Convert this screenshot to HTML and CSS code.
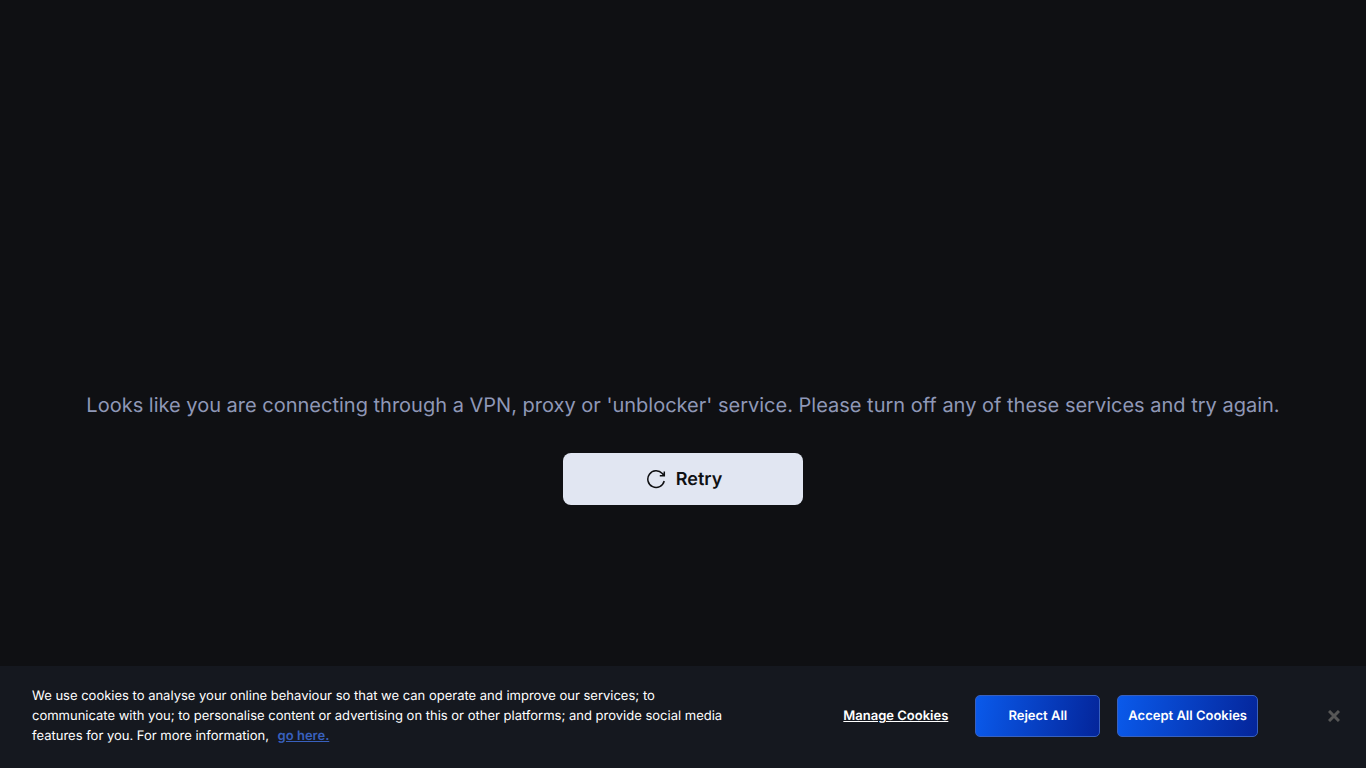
FILE: index.html
```html
<!DOCTYPE html>
<html lang="en">
<head>
<meta charset="utf-8">
<meta name="viewport" content="width=device-width, initial-scale=1">
<title>Connection unavailable</title>
<link rel="stylesheet" href="styles.css">
</head>
<body>
<main class="notice">
  <p class="notice-text">Looks like you are connecting through a VPN, proxy or 'unblocker' service. Please turn off any of these services and try again.</p>
  <button class="retry" type="button">
    <svg class="retry-icon" viewBox="0 0 20 20" aria-hidden="true"><path d="M18.200 12A8.300 8.300 0 1 1 16.300 4.600L17.200 5.600"/><path d="M18.300 2.500v4.300h-4.500"/><path d="M18.300 3.800v3h-3z" fill="currentColor" stroke="none"/></svg>
    Retry
  </button>
</main>
<section class="cookies" aria-label="Cookie consent">
  <p class="cookies-text">We use cookies to analyse your online behaviour so that we can operate and improve our services; to communicate with you; to personalise content or advertising on this or other platforms; and provide social media features for you. For more information, <a class="cookies-link" href="#">go here.</a></p>
  <div class="actions">
    <button class="manage" type="button">Manage Cookies</button>
    <button class="choice" type="button">Reject All</button>
    <button class="choice" type="button">Accept All Cookies</button>
  </div>
  <button class="close" type="button" aria-label="Close"><svg class="close-icon" viewBox="0 0 12 12" aria-hidden="true"><path d="M1 1l10 10M11 1L1 11"/></svg></button>
</section>
</body>
</html>
```
FILE: styles.css
```css
* { box-sizing: border-box; }
body {
  margin: 0;
  min-height: 100vh;
  display: flex;
  flex-direction: column;
  background: #0f1013;
  font-family: Inter, "Liberation Sans", sans-serif;
  text-rendering: geometricPrecision;
}
button { font-family: inherit; text-rendering: inherit; cursor: pointer; }
.notice {
  flex: 1;
  display: flex;
  flex-direction: column;
  align-items: center;
  justify-content: flex-end;
  gap: 32px;
  padding: 0 16px 161px;
}
.notice-text {
  margin: 0;
  color: #8f98b7;
  font-size: 20px;
  font-weight: 400;
  line-height: 32px;
  text-align: center;
}
.retry {
  display: flex;
  align-items: center;
  justify-content: center;
  gap: 10px;
  width: 240px;
  height: 52px;
  padding: 0 0 0 2px;
  border: 0;
  border-radius: 8px;
  background: #e1e6f2;
  color: #0f1013;
  font-size: 18px;
  font-weight: 600;
}
.retry-icon { width: 20px; height: 20px; fill: none; stroke: currentColor; stroke-width: 1.500; }
.cookies {
  display: flex;
  align-items: center;
  padding: 20px 16px 22px 32px;
  background: #15181f;
}
.cookies-text {
  flex: 0 1 709px;
  margin: 0;
  color: #fff;
  font-size: 13px;
  line-height: 20px;
}
.cookies-link { margin-left: 5px; color: #3860be; font-weight: 600; }
.actions { display: flex; align-items: center; gap: 17px; margin-left: auto; }
.manage {
  padding: 10px;
  border: 0;
  background: none;
  color: #fff;
  font-size: 13px;
  font-weight: 600;
  text-decoration: underline;
}
.choice {
  min-width: 125px;
  height: 42px;
  padding: 0 10px;
  border: 1px solid #3860be;
  border-radius: 5px;
  background: linear-gradient(100deg, #0a5aeb, #04259a);
  color: #fff;
  font-size: 13px;
  font-weight: 600;
}
.close { display: flex; margin-left: 60px; padding: 10px; border: 0; background: none; color: #565656; }
.close-icon { width: 12px; height: 12px; fill: none; stroke: currentColor; stroke-width: 3; }
```
